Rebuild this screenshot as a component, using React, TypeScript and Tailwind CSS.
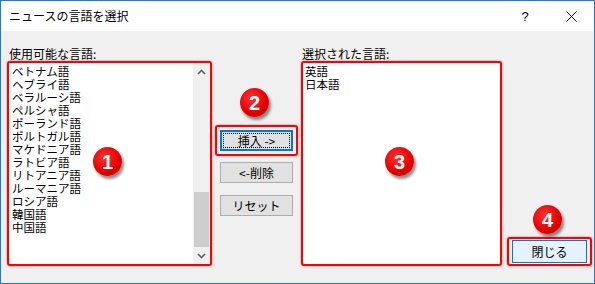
import React from 'react'

const available = [
  'ベトナム語',
  'ヘブライ語',
  'ベラルーシ語',
  'ペルシャ語',
  'ポーランド語',
  'ポルトガル語',
  'マケドニア語',
  'ラトビア語',
  'リトアニア語',
  'ルーマニア語',
  'ロシア語',
  '韓国語',
  '中国語',
]

const selected = ['英語', '日本語']

function Badge({ n, className }: { n: number; className: string }) {
  return (
    <div
      className={`absolute w-[29px] h-[29px] rounded-full flex items-center justify-center text-white text-[20px] font-bold bg-[radial-gradient(circle_at_40%_35%,#ff3030,#e00000_60%,#c80000)] shadow-[2px_3px_3px_rgba(0,0,0,0.45)] ${className}`}
      style={{ fontFamily: '"Liberation Sans", Arial, sans-serif' }}
    >
      {n}
    </div>
  )
}

function Chevron({ up }: { up?: boolean }) {
  return (
    <svg width="9" height="6" viewBox="0 0 9 6" className={up ? '' : 'rotate-180'}>
      <path d="M1 5 L4.5 1.5 L8 5" stroke="#606060" strokeWidth="1.6" fill="none" />
    </svg>
  )
}

export default function App() {
  return (
    <div
      className="relative w-[595px] h-[284px] border border-[#1a7cd4] bg-[#f0f0f0] flex flex-col overflow-hidden text-black"
      style={{ fontFamily: '"Noto Sans CJK JP", "Meiryo UI", sans-serif' }}
    >
      {/* Title bar */}
      <div className="h-[30px] bg-white flex items-center pl-[8px] shrink-0">
        <span className="text-[12px] leading-none">ニュースの言語を選択</span>
        <div className="ml-auto flex items-center">
          <span className="w-[46px] text-center text-[13px] leading-none" style={{ fontFamily: '"Liberation Sans", sans-serif' }}>?</span>
          <div className="w-[46px] flex justify-center">
            <svg width="11" height="11" viewBox="0 0 11 11">
              <path d="M0.5 0.5 L10.5 10.5 M10.5 0.5 L0.5 10.5" stroke="#111" strokeWidth="1" />
            </svg>
          </div>
        </div>
      </div>

      {/* Body */}
      <div className="flex pt-[15px] pl-[6px]">
        {/* Available list */}
        <div className="w-[205px] flex flex-col">
          <div className="h-[15px] pl-[2px] text-[12px] leading-[15px]">使用可能な言語:</div>
          <div className="h-[205px] border-2 border-[#ff0000] rounded-[3px] bg-white flex shadow-[0_0_2px_rgba(255,0,0,0.5)]">
            <div className="flex-1 pt-[2px] pl-[3px] text-[11.5px] leading-[13px]">
              {available.map((l) => (
                <div key={l} className="h-[13px]">{l}</div>
              ))}
            </div>
            <div className="w-[17px] bg-[#f0f0f0] flex flex-col">
              <div className="h-[17px] flex items-center justify-center">
                <Chevron up />
              </div>
              <div className="flex-1 flex flex-col justify-end px-[1px]">
                <div className="h-[55px] bg-[#cdcdcd]" />
              </div>
              <div className="h-[17px] flex items-center justify-center">
                <Chevron />
              </div>
            </div>
          </div>
        </div>

        {/* Buttons */}
        <div className="w-[89px] flex flex-col items-center pt-[79px]">
          <div className="border-2 border-[#ff0000] rounded-[3px] p-[3px] shadow-[0_0_2px_rgba(255,0,0,0.5)]">
            <button className="w-[73px] h-[21px] bg-[#e1e1e1] border-2 border-[#0078d7] p-[1px] flex">
              <span className="flex-1 border border-dotted border-black flex items-center justify-center text-[12px] leading-none">
                挿入 -&gt;
              </span>
            </button>
          </div>
          <button className="mt-[6px] w-[73px] h-[21px] bg-[#e1e1e1] border border-[#adadad] text-[12px] leading-none flex items-center justify-center">
            &lt;-削除
          </button>
          <button className="mt-[12px] w-[73px] h-[21px] bg-[#e1e1e1] border border-[#adadad] text-[12px] leading-none flex items-center justify-center">
            リセット
          </button>
        </div>

        {/* Selected list */}
        <div className="w-[201px] flex flex-col">
          <div className="h-[15px] pl-[1px] text-[12px] leading-[15px]">選択された言語:</div>
          <div className="h-[205px] border-2 border-[#ff0000] rounded-[3px] bg-white pt-[2px] pl-[2px] text-[11.5px] leading-[13px] shadow-[0_0_2px_rgba(255,0,0,0.5)]">
            {selected.map((l) => (
              <div key={l} className="h-[13px]">{l}</div>
            ))}
          </div>
        </div>

        {/* Close */}
        <div className="ml-[5px] flex flex-col justify-end">
          <div className="border-2 border-[#ff0000] rounded-[3px] px-[3px] py-[1px] shadow-[0_0_2px_rgba(255,0,0,0.5)]">
            <button className="w-[75px] h-[23px] bg-[#e5f1fb] border border-[#0078d7] text-[12px] leading-none flex items-center justify-center">
              閉じる
            </button>
          </div>
        </div>
      </div>

      <Badge n={1} className="left-[92px] top-[146px]" />
      <Badge n={2} className="left-[239px] top-[87px]" />
      <Badge n={3} className="left-[384px] top-[146px]" />
      <Badge n={4} className="left-[532px] top-[204px]" />
    </div>
  )
}
